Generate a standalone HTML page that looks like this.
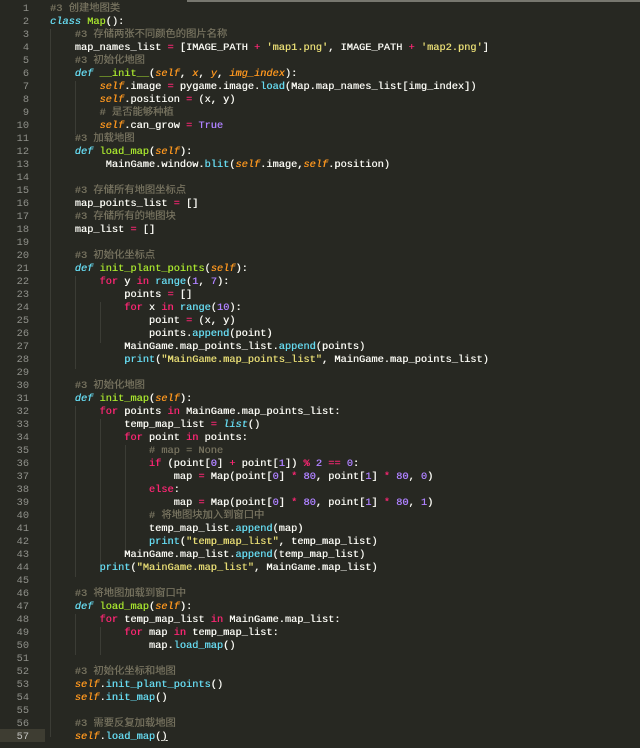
<!DOCTYPE html>
<html><head><meta charset="utf-8">
<style>
html,body{margin:0;padding:0;background:#272822;width:640px;height:748px;overflow:hidden}
#top{position:absolute;left:187px;top:0;width:453px;height:2px;background:#77776f}
#hl{position:absolute;left:0;top:729px;width:45px;height:13px;background:#3e3d32}
.ln{position:absolute;left:0;width:29px;text-align:right;color:#8f908a;font:10.3px/13px "Liberation Mono","Noto Sans CJK SC",monospace}
pre{position:absolute;left:50px;top:3px;margin:0;font:10.3px/13px "Liberation Mono","Noto Sans CJK SC",monospace;color:#f8f8f2;text-shadow:0.3px 0 0 currentColor}
.g{position:absolute;width:1px;background:#3b3c35}
.c{color:#75715e}.k{color:#f92672}.o{color:#f92672}.s{color:#fd971f;font-style:italic}
.f{color:#a6e22e}.b{color:#66d9ef}.i{color:#66d9ef;font-style:italic}.t{color:#e6db74}.n{color:#ae81ff}
.a{color:#fd971f;font-style:italic}
</style></head><body>
<div id="top"></div>
<div id="hl"></div>
<div class="g" style="left:50px;top:29px;height:708px"></div>
<div class="g" style="left:75px;top:81px;height:54px"></div>
<div class="g" style="left:75px;top:276px;height:93px"></div>
<div class="g" style="left:100px;top:302px;height:41px"></div>
<div class="g" style="left:75px;top:406px;height:171px"></div>
<div class="g" style="left:100px;top:419px;height:145px"></div>
<div class="g" style="left:125px;top:445px;height:106px"></div>
<div class="g" style="left:75px;top:614px;height:41px"></div>
<div class="g" style="left:100px;top:627px;height:28px"></div>
<pre><span class="c">#3 创建地图类</span>
<span class="i">class</span> <span class="f">Map</span>():
    <span class="c">#3 存储两张不同颜色的图片名称</span>
    map_names_list <span class="o">=</span> [IMAGE_PATH <span class="o">+</span> <span class="t">'map1.png'</span>, IMAGE_PATH <span class="o">+</span> <span class="t">'map2.png'</span>]
    <span class="c">#3 初始化地图</span>
    <span class="i">def</span> <span class="f">__init__</span>(<span class="a">self</span>, <span class="a">x</span>, <span class="a">y</span>, <span class="a">img_index</span>):
        <span class="s">self</span>.image <span class="o">=</span> pygame.image.<span class="b">load</span>(Map.map_names_list[img_index])
        <span class="s">self</span>.position <span class="o">=</span> (x, y)
        <span class="c"># 是否能够种植</span>
        <span class="s">self</span>.can_grow <span class="o">=</span> <span class="n">True</span>
    <span class="c">#3 加载地图</span>
    <span class="i">def</span> <span class="f">load_map</span>(<span class="a">self</span>):
         MainGame.window.<span class="b">blit</span>(<span class="s">self</span>.image,<span class="s">self</span>.position)

    <span class="c">#3 存储所有地图坐标点</span>
    map_points_list <span class="o">=</span> []
    <span class="c">#3 存储所有的地图块</span>
    map_list <span class="o">=</span> []

    <span class="c">#3 初始化坐标点</span>
    <span class="i">def</span> <span class="f">init_plant_points</span>(<span class="a">self</span>):
        <span class="k">for</span> y <span class="k">in</span> <span class="b">range</span>(<span class="n">1</span>, <span class="n">7</span>):
            points <span class="o">=</span> []
            <span class="k">for</span> x <span class="k">in</span> <span class="b">range</span>(<span class="n">10</span>):
                point <span class="o">=</span> (x, y)
                points.<span class="b">append</span>(point)
            MainGame.map_points_list.<span class="b">append</span>(points)
            <span class="b">print</span>(<span class="t">"MainGame.map_points_list"</span>, MainGame.map_points_list)

    <span class="c">#3 初始化地图</span>
    <span class="i">def</span> <span class="f">init_map</span>(<span class="a">self</span>):
        <span class="k">for</span> points <span class="k">in</span> MainGame.map_points_list:
            temp_map_list <span class="o">=</span> <span class="i">list</span>()
            <span class="k">for</span> point <span class="k">in</span> points:
                <span class="c"># map = None</span>
                <span class="k">if</span> (point[<span class="n">0</span>] <span class="o">+</span> point[<span class="n">1</span>]) <span class="o">%</span> <span class="n">2</span> <span class="o">==</span> <span class="n">0</span>:
                    map <span class="o">=</span> Map(point[<span class="n">0</span>] <span class="o">*</span> <span class="n">80</span>, point[<span class="n">1</span>] <span class="o">*</span> <span class="n">80</span>, <span class="n">0</span>)
                <span class="k">else</span>:
                    map <span class="o">=</span> Map(point[<span class="n">0</span>] <span class="o">*</span> <span class="n">80</span>, point[<span class="n">1</span>] <span class="o">*</span> <span class="n">80</span>, <span class="n">1</span>)
                <span class="c"># 将地图块加入到窗口中</span>
                temp_map_list.<span class="b">append</span>(map)
                <span class="b">print</span>(<span class="t">"temp_map_list"</span>, temp_map_list)
            MainGame.map_list.<span class="b">append</span>(temp_map_list)
        <span class="b">print</span>(<span class="t">"MainGame.map_list"</span>, MainGame.map_list)

    <span class="c">#3 将地图加载到窗口中</span>
    <span class="i">def</span> <span class="f">load_map</span>(<span class="a">self</span>):
        <span class="k">for</span> temp_map_list <span class="k">in</span> MainGame.map_list:
            <span class="k">for</span> map <span class="k">in</span> temp_map_list:
                map.<span class="b">load_map</span>()

    <span class="c">#3 初始化坐标和地图</span>
    <span class="s">self</span>.<span class="b">init_plant_points</span>()
    <span class="s">self</span>.<span class="b">init_map</span>()

    <span class="c">#3 需要反复加载地图</span>
    <span class="s">self</span>.<span class="b">load_map</span>(<u>)</u></pre>
<div class="ln" style="top:3px">1<br>2<br>3<br>4<br>5<br>6<br>7<br>8<br>9<br>10<br>11<br>12<br>13<br>14<br>15<br>16<br>17<br>18<br>19<br>20<br>21<br>22<br>23<br>24<br>25<br>26<br>27<br>28<br>29<br>30<br>31<br>32<br>33<br>34<br>35<br>36<br>37<br>38<br>39<br>40<br>41<br>42<br>43<br>44<br>45<br>46<br>47<br>48<br>49<br>50<br>51<br>52<br>53<br>54<br>55<br>56<br><span style="color:#c2c2bf">57</span></div>
</body></html>
